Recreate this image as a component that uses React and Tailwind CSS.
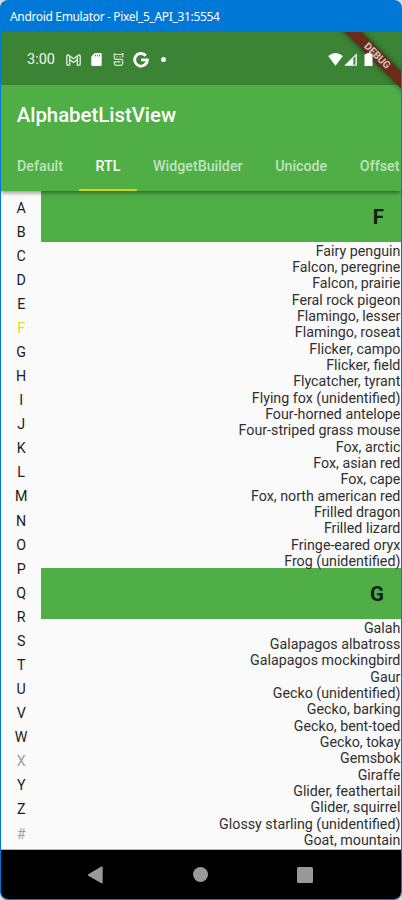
const LETTERS = [...'ABCDEFGHIJKLMNOPQRSTUVWXYZ#'];

const SECTIONS = [
  {
    letter: 'F',
    items: [
      'Fairy penguin', 'Falcon, peregrine', 'Falcon, prairie', 'Feral rock pigeon',
      'Flamingo, lesser', 'Flamingo, roseat', 'Flicker, campo', 'Flicker, field',
      'Flycatcher, tyrant', 'Flying fox (unidentified)', 'Four-horned antelope',
      'Four-striped grass mouse', 'Fox, arctic', 'Fox, asian red', 'Fox, cape',
      'Fox, north american red', 'Frilled dragon', 'Frilled lizard',
      'Fringe-eared oryx', 'Frog (unidentified)',
    ],
  },
  {
    letter: 'G',
    items: [
      'Galah', 'Galapagos albatross', 'Galapagos mockingbird', 'Gaur',
      'Gecko (unidentified)', 'Gecko, barking', 'Gecko, bent-toed', 'Gecko, tokay',
      'Gemsbok', 'Giraffe', 'Glider, feathertail', 'Glider, squirrel',
      'Glossy starling (unidentified)', 'Goat, mountain',
    ],
  },
];

function letterColor(letter) {
  if (letter === 'F') return 'text-[#d6de20]';
  if (letter === 'X' || letter === '#') return 'text-[#9e9e9e]';
  return 'text-[#1c1c1c]';
}

function StatusBar() {
  return (
    <div className="flex h-[53px] shrink-0 items-center bg-[#3c8435] pl-[26px] pt-[2px] text-white">
      <span className="w-[39px] pt-[1px] text-[14.500px] leading-5 text-[#f1f6f0]">3:00</span>
      <svg className="h-[12px] w-[15px]" viewBox="0 0 15 12" fill="none" stroke="#e6f0e5" strokeWidth="1.300" strokeLinejoin="round">
        <path d="M.8 2.300v8q0 .9.9.9h2V5.600l3.800 2.800 3.800-2.800v5.600h2q.9 0 .9-.9V2.300Q14.200.4 12.400 1.200L7.500 4.700 2.600 1.200Q.8.4.8 2.300Z" />
        <path d="M3.700 5.600V2M11.300 5.600V2" />
      </svg>
      <svg className="ml-[10px] h-[13px] w-[11px]" viewBox="0 0 11 13" fill="white">
        <path fillRule="evenodd" d="M3.700 0H9.700Q10.700 0 10.700 1V12Q10.700 13 9.700 13H1.300Q.3 13 .3 12V3.500ZM4 1.500V3.500H4.800V1.500ZM6 1.500V3.500H6.800V1.500ZM8 1.500V3.500H8.800V1.500Z" />
      </svg>
      <svg className="ml-[11px] h-[13px] w-[11px]" viewBox="0 0 11 13" fill="none" stroke="#d3e5d1" strokeWidth="1.200">
        <path d="M1.200.6 2.700 1.500H8.300L9.800.6V4.500M1.200.6V4.200Q1.200 6.400 3 6.400H8Q9.800 6.400 9.800 8.500V9.500Q9.800 12.300 7.500 12.300H3.500Q1.200 12.300 1.200 9.500V8.800H7.500" />
        <path d="M3.500 3.800H4.700M6.500 3.800H7.700" />
      </svg>
      <svg className="ml-[9px] h-[16px] w-[16px]" viewBox="0 0 15 15" fill="none" stroke="white" strokeWidth="2.700">
        <path d="M12 3.500A5.900 5.900 0 1 0 13.400 7.500V7.400H7.700" />
      </svg>
      <span className="ml-[12px] h-[5px] w-[5px] rounded-full bg-white" />
      <span className="grow" />
      <svg className="relative z-20 h-[13px] w-[15px]" viewBox="0 0 15 13" fill="white">
        <path d="M.1 3Q7.500-3 14.900 3L7.500 12.800Z" />
      </svg>
      <svg className="relative z-20 ml-[1px] h-[13px] w-[13px]" viewBox="0 0 13 13">
        <path fill="white" d="M.2 12.800 12.800.2V12.800Z" />
        <path fill="#4b8e45" d="M9.300 5.200 11.500 3V11.700H9.300Z" />
      </svg>
      <svg className="relative z-20 ml-[7px] mr-[28.500px] h-[13px] w-[9px]" viewBox="0 0 9 13" fill="white">
        <path d="M2.700 0H6.300V1.300H8.500V13H.5V1.300H2.700Z" />
      </svg>
    </div>
  );
}

function DebugBanner() {
  return (
    <div className="pointer-events-none absolute right-0 top-0 z-10 h-[70px] w-[70px] overflow-hidden">
      <div className="absolute left-[-14.500px] top-[18.400px] flex h-[12.200px] w-[120px] rotate-45 items-center justify-center bg-[#6b2b1a] text-[10.200px] font-bold leading-none tracking-[-0.100px] text-[#d3c3bf] shadow-[0_0_6px_rgba(0,0,0,0.5)]">
        DEBUG
      </div>
    </div>
  );
}

function Tab({ label, active }) {
  return (
    <div className={`relative flex h-full shrink-0 items-center px-[16.300px] ${active ? 'text-white' : 'text-[#c0e2be]'}`}>
      {label}
      {active && <span className="absolute -left-[0.500px] right-0 bottom-0 h-[2px] bg-[#d3d800]" />}
    </div>
  );
}

function AppBar() {
  return (
    <header className="relative z-[5] flex h-[106px] shrink-0 flex-col bg-[#4faf46] shadow-[0_2px_4px_rgba(0,0,0,0.4)]">
      <h1 className="flex h-[57px] items-center pl-[15.700px] pt-[3px] text-[20.360px] font-medium text-white">AlphabetListView</h1>
      <nav className="-ml-[0.300px] flex h-[49px] overflow-hidden text-[14.250px] font-medium">
        <Tab label="Default" />
        <Tab label="RTL" active />
        <Tab label="WidgetBuilder" />
        <Tab label="Unicode" />
        <Tab label="Offset" />
      </nav>
    </header>
  );
}

function Section({ letter, items }) {
  return (
    <section>
      <h2 className="flex h-[50.500px] items-center justify-end bg-[#4faf46] pr-[17px] pt-[2px] text-[20.360px] font-bold text-[#10220e]">{letter}</h2>
      <ul className="pr-[0.600px] text-right text-[14.250px] leading-[16.330px] text-[#303030]">
        {items.map((item) => <li key={item} className="relative top-[1.100px] whitespace-nowrap">{item}</li>)}
      </ul>
    </section>
  );
}

function NavigationBar() {
  return (
    <footer className="flex h-[50px] shrink-0 items-center justify-between border-t border-[#b5b5b5] bg-black pl-[86px] pr-[88.500px]">
      <svg className="h-[18px] w-[17px]" viewBox="0 0 17 18" fill="#999">
        <path d="M14.300.6Q15.700-.1 15.700 1.500V16.500Q15.700 18 14.300 17.300L1.300 9.800Q.4 9 1.300 8.200Z" />
      </svg>
      <span className="h-[15px] w-[15px] rounded-full bg-[#999]" />
      <span className="h-[16px] w-[16px] rounded-[1.500px] bg-[#999]" />
    </footer>
  );
}

export default function App() {
  return (
    <div className="h-[900px] w-[402px] overflow-hidden bg-[#dcdcdc] font-['Roboto',sans-serif]">
      <div className="flex h-full flex-col overflow-hidden rounded-[8px] bg-[#0078d7] px-px pb-px">
        <div className="flex h-8 shrink-0 items-center pl-[9px] pt-[2px] font-['Noto_Sans',sans-serif] text-[12px] tracking-[-0.340px] text-white">
          Android Emulator - Pixel_5_API_31:5554
        </div>
        <div className="relative flex min-h-0 grow flex-col overflow-hidden rounded-b-[7px] bg-[#fafafa]">
          <StatusBar />
          <AppBar />
          <main className="flex min-h-0 grow overflow-hidden">
            <div className="flex w-[40.400px] shrink-0 flex-col pt-[4.500px] text-center text-[14.250px]">
              {LETTERS.map((letter) => (
                <span key={letter} className={`h-[24.080px] shrink-0 leading-[24.080px] ${letterColor(letter)}`}>{letter}</span>
              ))}
            </div>
            <div className="min-w-0 grow overflow-hidden">
              {SECTIONS.map((section) => <Section key={section.letter} {...section} />)}
            </div>
          </main>
          <NavigationBar />
          <DebugBanner />
        </div>
      </div>
    </div>
  );
}
